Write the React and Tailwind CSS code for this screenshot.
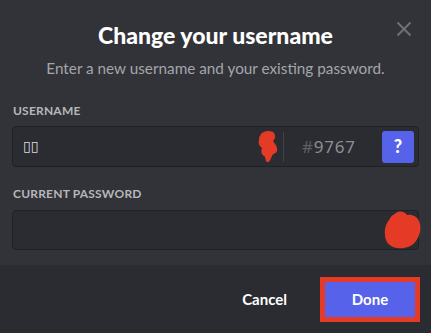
import React from "react";

export default function App() {
  return (
    <div
      className="relative w-[431px] h-[333px] bg-[#323338] flex flex-col overflow-hidden"
      style={{ fontFamily: 'Lato, "Noto Sans", sans-serif' }}
    >
      <button className="absolute left-[396px] top-[21px] w-4 h-4 text-[#6d7077]">
        <svg viewBox="0 0 16 16" width="16" height="16">
          <path d="M1.5 1.5 L14.5 14.5 M14.5 1.5 L1.5 14.5" stroke="currentColor" strokeWidth="2" />
        </svg>
      </button>

      <div className="pt-[20px] text-center">
        <h1 className="text-[23px] leading-[30px] font-black text-white">Change your username</h1>
        <p className="mt-[8px] text-[15.3px] leading-[20px] text-[#a3a6ab]">
          Enter a new username and your existing password.
        </p>
      </div>

      <div className="px-3 mt-[25px]">
        <label className="block pl-px text-[12px] leading-[16px] font-bold text-[#b5b7bb] tracking-[0.2px]">USERNAME</label>
        <div className="mt-[7px] h-[41px] rounded-[4px] border border-[#202125] bg-[#2b2c31] flex items-center pr-[4px]">
          <span className="pl-[10px] text-[14px] text-[#dcddde]" style={{ fontFamily: '"DejaVu Sans", sans-serif' }}>▯▯</span>
          <div className="flex-1" />
          <svg width="24" height="33" viewBox="0 0 24 33" className="mr-[1px]">
            <path
              d="M3 6 C5 0 15 0 17 3 C19 6 18 9 16 11 C18 14 21 17 20 21 C19 24 16 23 15 26 C14 29 12 33 10 32 C8 31 9 27 7 26 C4 24 4 21 5 18 C2 16 1 13 2 10 C2 8 2 7 3 6 Z"
              fill="#e53a25"
            />
          </svg>
          <div className="w-px h-[30px] bg-[#404248] ml-[1px]" />
          <div className="w-[98px] pl-[18px] text-[17px] tracking-[0.8px]" style={{ fontFamily: '"Noto Sans", sans-serif' }}>
            <span className="text-[#5b5e64]">#</span>
            <span className="text-[#8b8e93]">9767</span>
          </div>
          <div className="w-8 h-8 rounded-[3px] bg-[#5662e9] flex items-center justify-center text-white font-black text-[18px]">?</div>
        </div>

        <label className="block mt-[19px] pl-px text-[12px] leading-[16px] font-bold text-[#b5b7bb] tracking-[0.2px]">CURRENT PASSWORD</label>
        <div className="mt-[8px] h-[40px] rounded-[4px] border border-[#202125] bg-[#2b2c31] flex items-center justify-end">
          <svg width="37" height="38" viewBox="0 0 37 38" className="mr-[-3px]">
            <path
              d="M12 2 C16 -1 21 1 23 4 C27 3 33 5 35 10 C38 17 36 24 32 30 C28 36 20 38 13 37 C6 36 1 31 1 24 C0 18 2 13 5 9 C7 5 9 4 12 2 Z"
              fill="#e53a25"
            />
          </svg>
        </div>
      </div>

      <div className="mt-auto h-[68px] bg-[#2b2c31] flex items-center justify-end pr-[11px]">
        <button className="text-white text-[15px] font-bold mr-[33px]">Cancel</button>
        <div className="border-[5px] border-[#e53a25]">
          <button className="w-[90px] h-[35px] bg-[#5662e9] text-white text-[15px] font-bold">Done</button>
        </div>
      </div>
    </div>
  );
}
